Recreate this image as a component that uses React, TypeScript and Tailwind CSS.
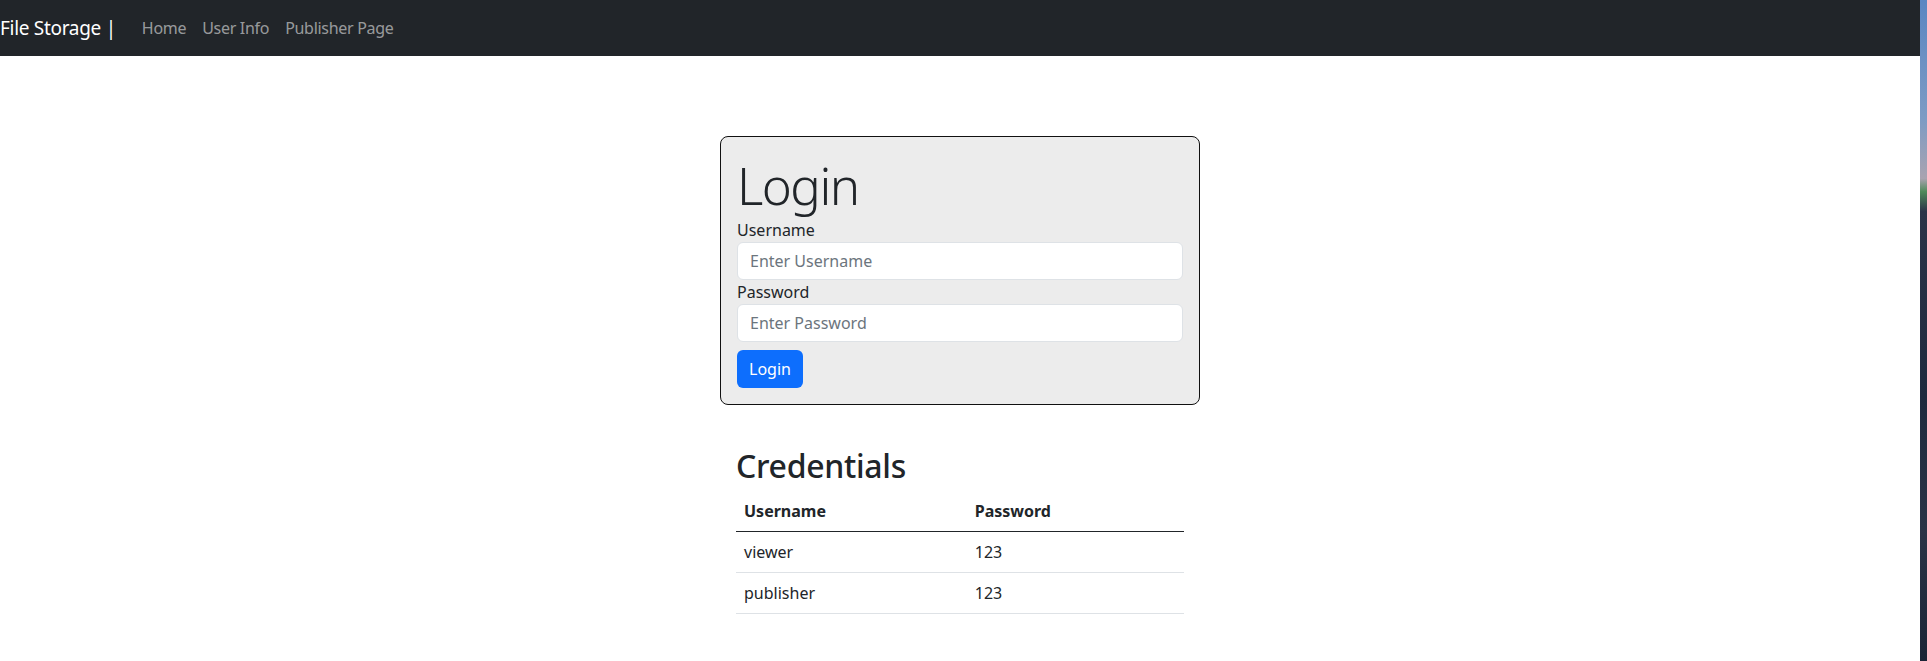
import React from "react";

const font = { fontFamily: '"Noto Sans", "Open Sans", sans-serif' };

function Navbar() {
  return (
    <nav className="h-[56px] bg-[#212529] flex items-center tracking-[-0.3px]">
      <span className="text-[19px] text-white leading-[30px] mr-[18px]">File Storage |</span>
      <a className="px-2 text-[16px] text-[#ffffff8c]">Home</a>
      <a className="px-2 text-[16px] text-[#ffffff8c]">User Info</a>
      <a className="px-2 text-[16px] text-[#ffffff8c]">Publisher Page</a>
    </nav>
  );
}

function LoginCard() {
  return (
    <div className="w-[480px] mx-auto mt-[80px] bg-[#ececec] border border-[#111] rounded-lg p-4 text-[#212529]">
      <h1 className="text-[51px] font-light leading-[65px] tracking-[-1.5px]">Login</h1>
      <label className="block text-[16px] leading-[24px]">Username</label>
      <input
        className="block w-full h-[38px] px-3 bg-white border border-[#dee2e6] rounded-md text-[16px] placeholder:text-[#6c757d] outline-none"
        placeholder="Enter Username"
      />
      <label className="block text-[16px] leading-[24px]">Password</label>
      <input
        type="password"
        className="block w-full h-[38px] px-3 bg-white border border-[#dee2e6] rounded-md text-[16px] placeholder:text-[#6c757d] outline-none"
        placeholder="Enter Password"
      />
      <button className="mt-2 h-[38px] px-3 bg-[#0d6efd] text-white text-[16px] rounded-md">Login</button>
    </div>
  );
}

function Credentials() {
  const rows = [
    ["viewer", "123"],
    ["publisher", "123"],
  ];
  return (
    <div className="w-[480px] mx-auto mt-[42px] px-4 text-[#212529]">
      <h2 className="text-[32px] font-medium leading-[38px] mb-[6px] tracking-[-0.3px]">Credentials</h2>
      <table className="w-full text-[16px] leading-[24px] text-left">
        <thead>
          <tr className="border-b border-[#212529]">
            <th className="p-2 font-bold">Username</th>
            <th className="p-2 font-bold">Password</th>
          </tr>
        </thead>
        <tbody>
          {rows.map((r) => (
            <tr key={r[0]} className="border-b border-[#dee2e6]">
              <td className="p-2">{r[0]}</td>
              <td className="p-2">{r[1]}</td>
            </tr>
          ))}
        </tbody>
      </table>
    </div>
  );
}

export default function App() {
  return (
    <div className="h-[661px] flex overflow-hidden bg-white" style={font}>
      <div className="w-[1920px] shrink-0">
        <Navbar />
        <LoginCard />
        <Credentials />
      </div>
      {/* sliver of desktop wallpaper beyond the browser window */}
      <div className="flex-1 bg-[linear-gradient(180deg,#5a86c2_0%,#7d9bc4_18%,#a9a3b0_27%,#4f8a5a_29%,#2b3348_32%,#1e2a3e_60%,#2a3346_80%,#1b2436_100%)]" />
    </div>
  );
}
